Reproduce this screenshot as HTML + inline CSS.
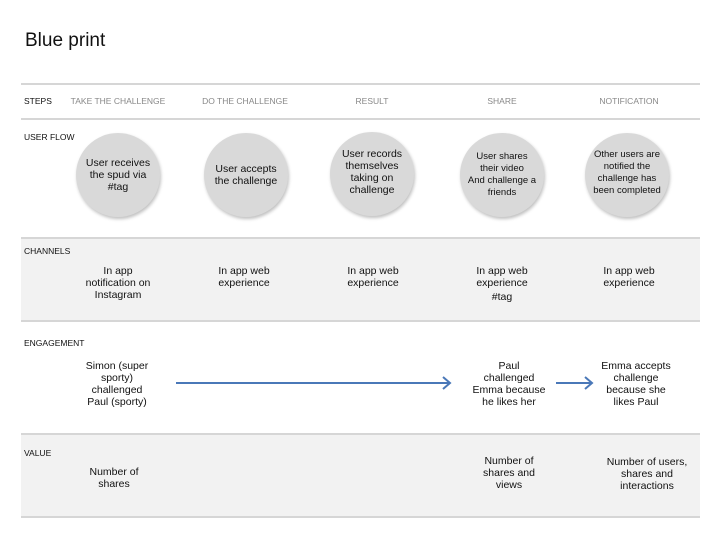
<!DOCTYPE html>
<html><head><meta charset="utf-8"><style>
body{margin:0;width:720px;height:540px;background:#fff;font-family:"Liberation Sans",sans-serif;color:#111;position:relative;overflow:hidden}
.a{position:absolute}
.t{position:absolute;text-align:center;font-size:10.5px;line-height:12px;transform:translateX(-50%);white-space:nowrap}
.l{position:absolute;left:21px;width:679px;height:2px;background:#d6d6d6}
.band{position:absolute;left:21px;width:679px;background:#f2f2f2}
.lab{position:absolute;left:24px;font-size:8.5px;color:#111}
.h{position:absolute;font-size:8.5px;color:#888;transform:translateX(-50%);white-space:nowrap}
.c{position:absolute;width:84px;height:84px;border-radius:50%;background:#d9d9d9;box-shadow:1px 2px 3px rgba(0,0,0,.25);display:flex;align-items:center;justify-content:center;text-align:center;font-size:10.5px;line-height:12px}
</style></head><body>
<div class="a" style="left:25px;top:30px;font-size:19px">Blue print</div>
<div class="band" style="top:238px;height:83px"></div>
<div class="band" style="top:434px;height:83px"></div>
<div class="l" style="top:83px"></div>
<div class="l" style="top:118px"></div>
<div class="l" style="top:237px"></div>
<div class="l" style="top:320px"></div>
<div class="l" style="top:433px"></div>
<div class="l" style="top:516px"></div>
<div class="lab" style="top:96px">STEPS</div>
<div class="h" style="left:118px;top:96px">TAKE THE CHALLENGE</div>
<div class="h" style="left:245px;top:96px">DO THE CHALLENGE</div>
<div class="h" style="left:372px;top:96px">RESULT</div>
<div class="h" style="left:502px;top:96px">SHARE</div>
<div class="h" style="left:629px;top:96px">NOTIFICATION</div>
<div class="lab" style="top:132px">USER FLOW</div>
<div class="c" style="left:76px;top:133px">User receives<br>the spud via<br>#tag</div>
<div class="c" style="left:204px;top:133px">User accepts<br>the challenge</div>
<div class="c" style="left:330px;top:132px;align-items:flex-start;padding-top:0"><div style="margin-top:16px">User records<br>themselves<br>taking on<br>challenge</div></div>
<div class="c" style="left:460px;top:133px;font-size:9.5px">User shares<br>their video<br>And challenge a<br>friends</div>
<div class="c" style="left:585px;top:133px;font-size:9.5px;align-items:flex-start"><div style="margin-top:16px">Other users are<br>notified the<br>challenge has<br>been completed</div></div>
<div class="lab" style="top:246px">CHANNELS</div>
<div class="t" style="left:118px;top:265px">In app<br>notification on<br>Instagram</div>
<div class="t" style="left:244px;top:265px">In app web<br>experience</div>
<div class="t" style="left:373px;top:265px">In app web<br>experience</div>
<div class="t" style="left:502px;top:265px">In app web<br>experience<br><span style="line-height:16px">#tag</span></div>
<div class="t" style="left:629px;top:265px">In app web<br>experience</div>
<div class="lab" style="top:338px">ENGAGEMENT</div>
<div class="t" style="left:117px;top:360px">Simon (super<br>sporty)<br>challenged<br>Paul (sporty)</div>
<div class="t" style="left:509px;top:360px">Paul<br>challenged<br>Emma because<br>he likes her</div>
<div class="t" style="left:636px;top:360px">Emma accepts<br>challenge<br>because she<br>likes Paul</div>
<svg class="a" style="left:0;top:0" width="720" height="540"><g stroke="#4a78b8" stroke-width="2" fill="none"><path d="M176 383H450M443 377l7 6-7 6"/><path d="M556 383H592M585 377l7 6-7 6"/></g></svg>
<div class="lab" style="top:448px">VALUE</div>
<div class="t" style="left:114px;top:466px">Number of<br>shares</div>
<div class="t" style="left:509px;top:455px">Number of<br>shares and<br>views</div>
<div class="t" style="left:647px;top:456px">Number of users,<br>shares and<br>interactions</div>
</body></html>
